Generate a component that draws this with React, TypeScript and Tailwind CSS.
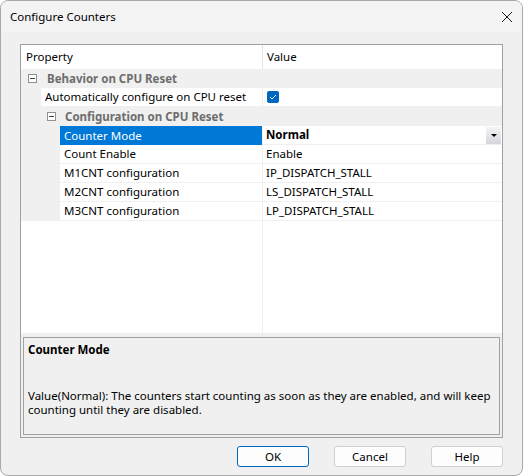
import React from 'react';

interface Row {
  label: string;
  value?: string;
  level: 1 | 2;
  selected?: boolean;
  bold?: boolean;
  combo?: boolean;
  check?: boolean;
}

const rows: Row[] = [
  { label: 'Automatically configure on CPU reset', level: 1, check: true },
];

const subRows: Row[] = [
  { label: 'Counter Mode', value: 'Normal', level: 2, selected: true, bold: true, combo: true },
  { label: 'Count Enable', value: 'Enable', level: 2 },
  { label: 'M1CNT configuration', value: 'IP_DISPATCH_STALL', level: 2 },
  { label: 'M2CNT configuration', value: 'LS_DISPATCH_STALL', level: 2 },
  { label: 'M3CNT configuration', value: 'LP_DISPATCH_STALL', level: 2 },
];

const MinusBox: React.FC = () => (
  <span className="w-[9px] h-[9px] border border-[#919191] bg-white flex items-center justify-center shrink-0">
    <span className="w-[5px] h-px bg-[#444]" />
  </span>
);

const Category: React.FC<{ label: string; level: 1 | 2 }> = ({ label, level }) => (
  <div className="h-[19px] flex items-center bg-[#f0f0f0]">
    <div className={level === 1 ? 'pl-[7px] pr-[10px] flex items-center' : 'pl-[26px] pr-[9px] flex items-center'}>
      <MinusBox />
    </div>
    <span className="font-bold text-[#6d6d6d]">{label}</span>
  </div>
);

const PropRow: React.FC<{ row: Row }> = ({ row }) => (
  <div className="h-[19px] flex">
    <div className="w-[241px] flex">
      <div className={row.level === 1 ? 'w-[20px] bg-[#f0f0f0]' : 'w-[39px] bg-[#f0f0f0]'} />
      <div
        className={
          row.selected
            ? 'flex-1 flex items-center pl-[4px] bg-[#0078d7] text-white'
            : 'flex-1 flex items-center pl-[4px] border-b border-[#f0f0f0]'
        }
      >
        {row.label}
      </div>
    </div>
    <div className="w-px bg-[#f0f0f0]" />
    <div className="flex-1 flex items-center pl-[3px] border-b border-[#f0f0f0]">
      {row.check && (
        <span className="w-[12px] h-[12px] rounded-[2px] bg-[#0067c0] flex items-center justify-center ml-px">
          <svg width="8" height="6" viewBox="0 0 8 6">
            <path d="M1 3 L3 5 L7 1" fill="none" stroke="white" strokeWidth="1" />
          </svg>
        </span>
      )}
      {row.value && <span className={row.bold ? 'font-bold flex-1' : 'flex-1'}>{row.value}</span>}
      {row.combo && (
        <span className="w-[15px] h-[17px] mr-px bg-gradient-to-b from-[#f4f4f6] to-[#d4d4dc] flex items-center justify-center">
          <span className="w-0 h-0 border-l-[3px] border-r-[3px] border-t-[3px] border-l-transparent border-r-transparent border-t-black" />
        </span>
      )}
    </div>
  </div>
);

const App: React.FC = () => {
  return (
    <div className="w-[523px] h-[476px] bg-white font-['Segoe_UI','Noto_Sans',sans-serif] text-[11.5px] text-black">
      <div className="w-full h-full rounded-[8px] border border-[#a9a9a9] bg-[#f0f0f0] overflow-hidden flex flex-col">
        <div className="h-[31px] bg-[#f3f3f3] flex items-center justify-between pl-[9px] pr-[9px]">
          <span className="text-[11.5px]">Configure Counters</span>
          <svg width="12" height="12" viewBox="0 0 12 12">
            <path d="M1 1 L11 11 M11 1 L1 11" stroke="#1a1a1a" strokeWidth="1" />
          </svg>
        </div>
        <div className="flex-1 flex flex-col px-[19px] pt-[12px]">
          <div className="h-[394px] border border-[#a0a0a0] flex flex-col">
            <div className="flex-1 bg-white flex flex-col">
              <div className="h-[24px] flex">
                <div className="w-[241px] flex items-center pl-[5px]">Property</div>
                <div className="w-px bg-[#e5e5e5]" />
                <div className="flex-1 flex items-center pl-[4px]">Value</div>
              </div>
              <Category label="Behavior on CPU Reset" level={1} />
              {rows.map(r => (
                <PropRow key={r.label} row={r} />
              ))}
              <Category label="Configuration on CPU Reset" level={2} />
              {subRows.map(r => (
                <PropRow key={r.label} row={r} />
              ))}
              <div className="flex-1 flex">
                <div className="w-[241px]" />
                <div className="w-px bg-[#f0f0f0]" />
                <div className="flex-1" />
              </div>
            </div>
            <div className="h-[4px] bg-[#f0f0f0]" />
            <div className="h-[98px] mx-[2px] mb-[2px] border border-[#a0a0a0] bg-[#f0f0f0] px-[4px] pt-[4px]">
              <div className="font-bold leading-[16px]">Counter Mode</div>
              <div className="leading-[14px] mt-[31px]">
                Value(Normal): The counters start counting as soon as they are enabled, and will keep counting until they are disabled.
              </div>
            </div>
          </div>
          <div className="flex justify-end gap-[25px] mt-[8px]">
            <button className="w-[72px] h-[21px] rounded-[3px] border border-[#0067c0] bg-[#fdfdfd]">OK</button>
            <button className="w-[72px] h-[21px] rounded-[3px] border border-[#d0d0d0] bg-[#fdfdfd]">Cancel</button>
            <button className="w-[72px] h-[21px] rounded-[3px] border border-[#d0d0d0] bg-[#fdfdfd]">Help</button>
          </div>
        </div>
      </div>
    </div>
  );
};

export default App;
